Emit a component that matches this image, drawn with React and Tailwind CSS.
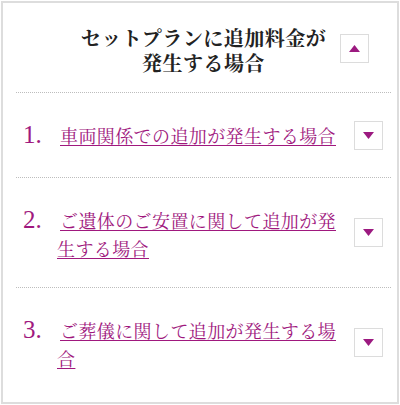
import React from 'react';

const font = { fontFamily: '"Liberation Serif", "Noto Serif CJK JP", "Noto Sans CJK JP", serif' };

const items = [
  { no: '1.', text: '車両関係での追加が発生する場合' },
  { no: '2.', text: 'ご遺体のご安置に関して追加が発生する場合' },
  { no: '3.', text: 'ご葬儀に関して追加が発生する場合' },
];

const Toggle = ({ up }) => (
  <button className="w-[29px] h-[29px] border border-[#dcdcdc] bg-white flex items-center justify-center shrink-0">
    <svg width="11" height="7" viewBox="0 0 11 7">
      {up ? <polygon points="5.5,0 11,7 0,7" fill="#9c1a80" /> : <polygon points="0,0 11,0 5.5,7" fill="#9c1a80" />}
    </svg>
  </button>
);

export default function App() {
  return (
    <div className="bg-white w-[400px] h-[405px] pt-[1px] pl-[1px]" style={font}>
      <div className="w-[398px] h-[403px] border-2 border-[#dddddd] pl-[13px] pr-[6px] flex flex-col">
        <div className="grid grid-cols-[1fr_auto_1fr] items-start pt-[24px] pb-[15px]">
          <div></div>
          <h2 className="text-[20px] leading-[25px] font-bold tracking-[0.5px] text-[#222] text-center">
            セットプランに追加料金が<br />発生する場合
          </h2>
          <div className="pl-[14px] pt-[7px]">
            <Toggle up />
          </div>
        </div>
        {items.map((item, idx) => (
          <div
            key={idx}
            className={`border-t border-dotted border-[#bdbdbd] pl-[7px] pr-[8px] py-[23px] ${idx === items.length - 1 ? 'flex-1' : ''}`}
          >
            <div className="flex items-center">
              <div className="flex items-baseline flex-1 min-w-0">
                <span className="text-[25px] leading-[38px] text-[#a0187e] w-[34px] shrink-0">{item.no}</span>
                <a href="#" className="text-[18px] leading-[28px] tracking-[0.4px] text-[#a0187e] underline underline-offset-[2px] indent-[3px] w-[284px]">
                  {item.text}
                </a>
              </div>
              <Toggle />
            </div>
          </div>
        ))}
      </div>
    </div>
  );
}
